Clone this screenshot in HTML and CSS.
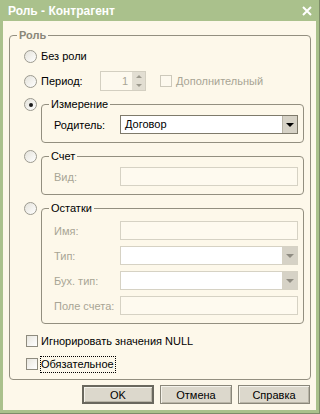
FILE: index.html
```html
<!DOCTYPE html>
<html lang="ru">
<head>
<meta charset="utf-8">
<title>Роль - Контрагент</title>
<link rel="stylesheet" href="styles.css">
</head>
<body>
<div class="window">
    <div class="titlebar">
        <span class="title">Роль - Контрагент</span>
        <svg class="close" width="10" height="10" viewBox="0 0 10 10">
            <path d="M1 1 L9 9 M9 1 L1 9" stroke="#fff" stroke-width="2" fill="none"/>
        </svg>
    </div>
    <div class="client">
        <fieldset class="group main">
            <legend>Роль</legend>
            <div class="main-body">
                <div class="opt">
                    <span class="radio"></span>
                    <span class="opt-text">Без роли</span>
                </div>
                <div class="opt period">
                    <span class="radio"></span>
                    <span class="opt-text period-label">Период:</span>
                    <div class="spin">
                        <span class="num">1</span>
                        <span class="arrows">
                            <span class="up"><i></i></span>
                            <span class="down"><i></i></span>
                        </span>
                    </div>
                    <span class="check off"></span>
                    <span class="dim extra">Дополнительный</span>
                </div>

                <div class="sub">
                    <span class="radio on"></span>
                    <fieldset class="group inner">
                        <legend>Измерение</legend>
                        <div class="inner-body">
                            <div class="field">
                                <span class="label">Родитель:</span>
                                <div class="combo">
                                    <span class="value">Договор</span>
                                    <span class="drop"><i></i></span>
                                </div>
                            </div>
                        </div>
                    </fieldset>
                </div>

                <div class="sub">
                    <span class="radio"></span>
                    <fieldset class="group inner">
                        <legend>Счет</legend>
                        <div class="inner-body">
                            <div class="field">
                                <span class="label dim">Вид:</span>
                                <div class="input"></div>
                            </div>
                        </div>
                    </fieldset>
                </div>

                <div class="sub">
                    <span class="radio"></span>
                    <fieldset class="group inner">
                        <legend>Остатки</legend>
                        <div class="inner-body rest">
                            <div class="field">
                                <span class="label dim">Имя:</span>
                                <div class="input"></div>
                            </div>
                            <div class="field">
                                <span class="label dim">Тип:</span>
                                <div class="combo disabled">
                                    <span class="value"></span>
                                    <span class="drop"><i></i></span>
                                </div>
                            </div>
                            <div class="field">
                                <span class="label dim">Бух. тип:</span>
                                <div class="combo disabled">
                                    <span class="value"></span>
                                    <span class="drop"><i></i></span>
                                </div>
                            </div>
                            <div class="field">
                                <span class="label dim">Поле счета:</span>
                                <div class="input"></div>
                            </div>
                        </div>
                    </fieldset>
                </div>

                <div class="opt chk first-chk">
                    <span class="check"></span>
                    <span class="chk-text">Игнорировать значения NULL</span>
                </div>
                <div class="opt chk">
                    <span class="check"></span>
                    <span class="chk-text focus">Обязательное</span>
                </div>
            </div>
        </fieldset>

        <div class="buttons">
            <button class="btn default">OK</button>
            <button class="btn">Отмена</button>
            <button class="btn">Справка</button>
        </div>
    </div>
</div>
</body>
</html>
```

FILE: styles.css
```css
body {
    margin: 0;
    font-family: "Liberation Sans", Arial, sans-serif;
    font-size: 11px;
    color: #000;
}
.window {
    width: 320px;
    height: 414px;
    box-sizing: border-box;
    background-color: #aac18c;
    border-right: 1px solid #7d8c68;
    border-bottom: 1px solid #7d8c68;
    display: flex;
    flex-direction: column;
}
.titlebar {
    height: 21px;
    flex: none;
    display: flex;
    align-items: center;
    justify-content: space-between;
    padding: 0 7px 0 8px;
    color: #fff;
    font-size: 12px;
    font-weight: bold;
}
.client {
    flex: 1;
    margin: 0 3px 3px 3px;
    background-color: #fdf8ea;
    display: flex;
    flex-direction: column;
}

/* group boxes */
.group {
    margin: 0;
    padding: 0;
    min-width: 0;
    border: 1px solid #938f80;
    border-radius: 4px;
}
.group legend {
    margin-left: 7px;
    padding: 0 2px;
    line-height: 14px;
}
.main {
    margin: 7px 5px 0 6px;
}
.main > legend {
    font-weight: bold;
    color: #8a8779;
}
.main-body {
    padding: 4px 6px 5px 14px;
}
.inner {
    flex: 1;
}
.inner-body {
    padding: 4px 5px 8px 12px;
}
.inner-body.rest {
    padding-top: 6px;
    display: flex;
    flex-direction: column;
    gap: 6px;
}

/* rows */
.opt {
    display: flex;
    align-items: center;
    height: 20px;
}
.period {
    margin-top: 5px;
}
.opt-text {
    margin-left: 4px;
}
.period-label {
    width: 59px;
}
.sub {
    display: flex;
    align-items: flex-start;
    margin-top: 6px;
}
.sub .radio {
    margin-top: 1px;
    margin-right: 4px;
}
.chk {
    padding-left: 2px;
    margin-top: 3px;
}
.first-chk {
    margin-top: 7px;
}
.chk-text {
    margin-left: 3px;
}
.focus {
    margin-left: 2px;
    border: 1px dotted #000;
    padding: 0 1px 0 0;
    line-height: 15px;
}
.field {
    display: flex;
    align-items: center;
    height: 19px;
}
.label {
    width: 66px;
    flex: none;
}
.dim {
    color: #a8a595;
}

/* radio and check */
.radio {
    width: 13px;
    height: 13px;
    flex: none;
    box-sizing: border-box;
    border-radius: 50%;
    border: 1px solid #9c9a90;
    background: linear-gradient(135deg, #e4e2da, #ffffff);
    display: flex;
    align-items: center;
    justify-content: center;
}
.radio.on::after {
    content: "";
    width: 4px;
    height: 4px;
    border-radius: 50%;
    background-color: #1c1c1c;
}
.check {
    width: 12px;
    height: 12px;
    flex: none;
    box-sizing: border-box;
    border: 1px solid #8e8b7e;
    background: linear-gradient(135deg, #e8e6de, #ffffff);
}
.check.off {
    margin-left: 14px;
    border-color: #cdc9bb;
    background: #fdf9ee;
}
.extra {
    margin-left: 4px;
}

/* spinner */
.spin {
    width: 46px;
    height: 20px;
    box-sizing: border-box;
    border: 1px solid #d3cfc1;
    display: flex;
    background-color: #fdf9ee;
}
.spin .num {
    flex: 1;
    text-align: right;
    padding-right: 4px;
    line-height: 18px;
    color: #a8a595;
}
.spin .arrows {
    width: 13px;
    display: flex;
    flex-direction: column;
    background-color: #e2ded2;
}
.spin .up, .spin .down {
    flex: 1;
    display: flex;
    align-items: center;
    justify-content: center;
}
.spin .up i {
    border-left: 3px solid transparent;
    border-right: 3px solid transparent;
    border-bottom: 3px solid #9d9a8e;
}
.spin .down i {
    border-left: 3px solid transparent;
    border-right: 3px solid transparent;
    border-top: 3px solid #9d9a8e;
}

/* inputs */
.input {
    width: 178px;
    height: 19px;
    box-sizing: border-box;
    border: 1px solid #d6d2c4;
    background-color: #fefaef;
}
.combo {
    width: 178px;
    height: 19px;
    box-sizing: border-box;
    border: 1px solid #7e7a6b;
    background-color: #fff;
    display: flex;
}
.combo .value {
    flex: 1;
    padding-left: 4px;
    line-height: 17px;
}
.combo .drop {
    width: 14px;
    background-color: #d6d2c6;
    border-left: 1px solid #b8b4a6;
    display: flex;
    align-items: center;
    justify-content: center;
}
.combo .drop i {
    border-left: 4px solid transparent;
    border-right: 4px solid transparent;
    border-top: 4px solid #000;
}
.combo.disabled {
    border-color: #d6d2c4;
}
.combo.disabled .drop {
    border-left-color: #d6d2c4;
}
.combo.disabled .drop i {
    border-top-color: #8f8c82;
}

/* buttons */
.buttons {
    display: flex;
    justify-content: flex-end;
    gap: 6px;
    margin-top: 5px;
    padding-right: 6px;
}
.btn {
    width: 72px;
    height: 19px;
    padding: 0;
    font-family: "Liberation Sans", Arial, sans-serif;
    font-size: 11px;
    color: #000;
    background-color: #dcd8cc;
    border: 1px solid #8a877a;
    box-shadow: inset 1px 1px 0 #f4f2ea, inset -1px -1px 0 #b9b5a7;
}
.btn.default {
    border: 2px solid #6a685e;
}
```
